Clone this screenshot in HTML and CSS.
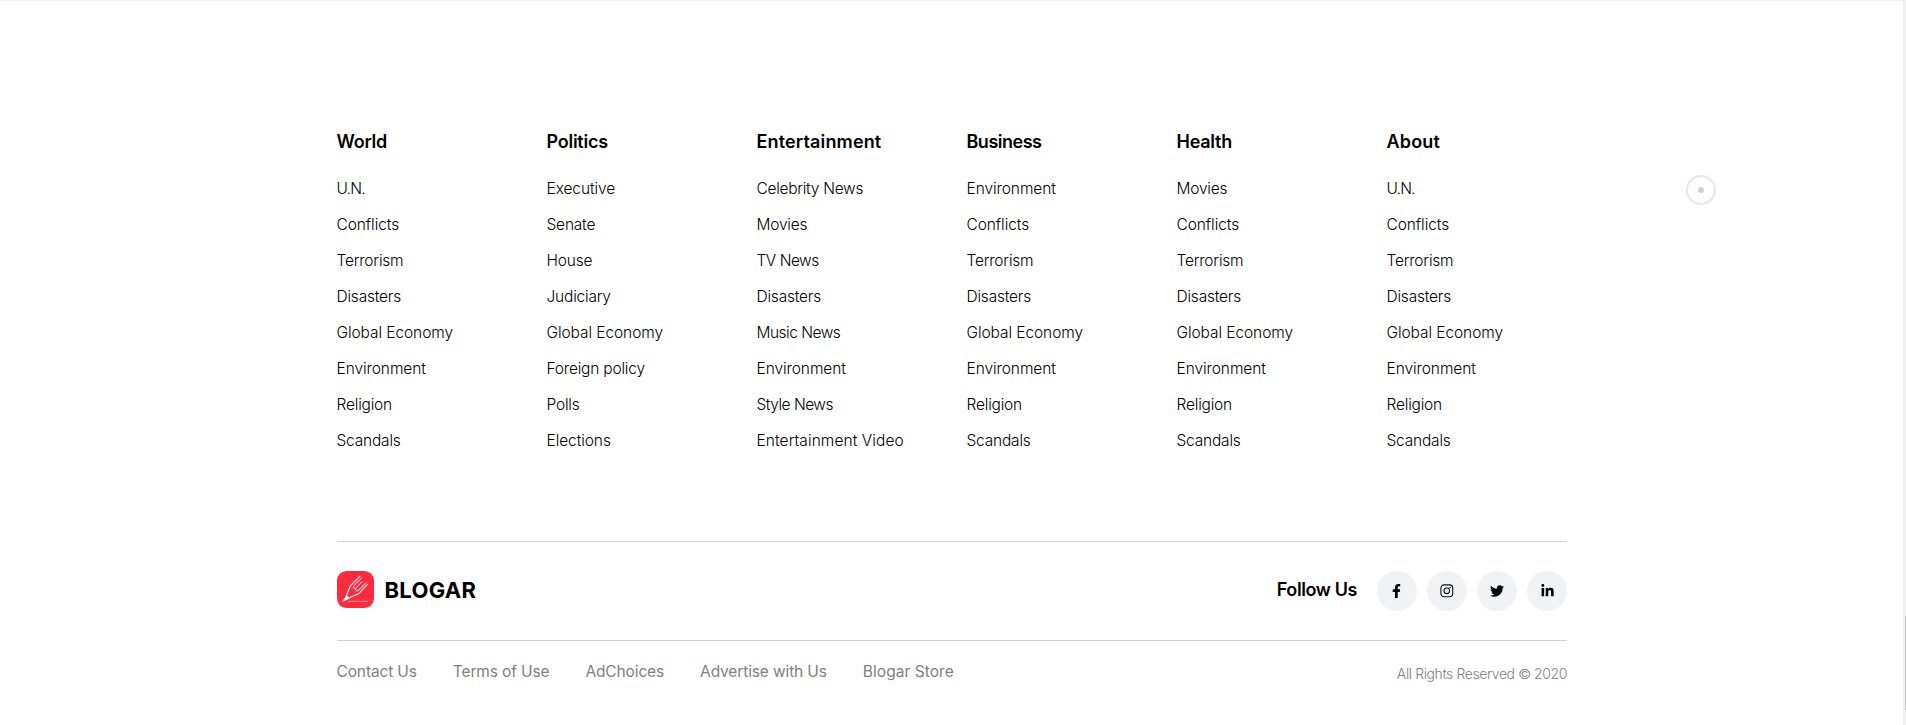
FILE: index.html
```html
<!DOCTYPE html>
<html lang="en">
<head>
<meta charset="utf-8">
<title>Blogar</title>
<link rel="stylesheet" href="styles.css">
</head>
<body>
<footer class="footer">
  <div class="columns">
    <section class="column"><h2>World</h2><ul><li class="tightest">U.N.</li><li class="wide">Conflicts</li><li>Terrorism</li><li>Disasters</li><li class="wide">Global Economy</li><li class="wide">Environment</li><li>Religion</li><li>Scandals</li></ul></section>
    <section class="column"><h2>Politics</h2><ul><li class="wide">Executive</li><li>Senate</li><li>House</li><li>Judiciary</li><li class="wide">Global Economy</li><li>Foreign policy</li><li>Polls</li><li class="wide">Elections</li></ul></section>
    <section class="column"><h2 class="wide-title">Entertainment</h2><ul><li class="snug">Celebrity News</li><li>Movies</li><li class="tight">TV News</li><li>Disasters</li><li class="tight">Music News</li><li class="wide">Environment</li><li class="tight">Style News</li><li class="wider">Entertainment Video</li></ul></section>
    <section class="column"><h2 class="tight-title">Business</h2><ul><li class="wide">Environment</li><li class="wide">Conflicts</li><li>Terrorism</li><li>Disasters</li><li class="wide">Global Economy</li><li class="wide">Environment</li><li>Religion</li><li>Scandals</li></ul></section>
    <section class="column"><h2>Health</h2><ul><li>Movies</li><li class="wide">Conflicts</li><li>Terrorism</li><li>Disasters</li><li class="wide">Global Economy</li><li class="wide">Environment</li><li>Religion</li><li>Scandals</li></ul></section>
    <section class="column"><h2 class="wide-title">About</h2><ul><li class="tightest">U.N.</li><li class="wide">Conflicts</li><li>Terrorism</li><li>Disasters</li><li class="wide">Global Economy</li><li class="wide">Environment</li><li>Religion</li><li>Scandals</li></ul></section>
  </div>
  <div class="brand-row">
    <div class="brand">
      <svg class="brand-mark" viewBox="0 0 37 37" fill="none" stroke="#fff" stroke-linecap="round" stroke-linejoin="round">
        <rect width="37" height="37" rx="9.5" fill="#ff2b3d" stroke="none"/>
        <path d="M23 5.2 13.2 15.2 9.3 24.8 11.8 27 21.5 22.8 30.3 13.4" stroke-width="1.2"/>
        <path d="M24.5 7 17.2 14.6c-1.5 2.3-.6 3.6 1.5 2.7l6.3-6.6M28.8 11.8 21.8 19c-2.2 1.6-3.8.8-3.1-1.7" stroke-width="1"/>
        <path d="M9.3 25.2 5.4 30.5 11.4 27.7Z" fill="#fff" stroke-width=".8"/>
        <path d="M11 30.4h20" stroke-width=".8" opacity=".7"/>
      </svg>
      <span class="brand-name">BLOGAR</span>
    </div>
    <div class="social">
      <span class="social-label">Follow Us</span>
      <a class="social-link"><svg class="facebook" width="9" height="14" viewBox="0 0 320 512"><path d="M279.14 288l14.22-92.66h-88.91v-60.13c0-25.35 12.42-50.06 52.24-50.06h40.42V6.26S260.43 0 225.36 0c-73.22 0-121.08 44.38-121.08 124.72v70.62H22.89V288h81.39v224h100.17V288z"/></svg></a>
      <a class="social-link"><svg width="14" height="14" viewBox="0 0 14 14" fill="none" stroke="#111"><rect x=".9" y=".9" width="11.8" height="11.8" rx="3.2" stroke-width="1.1"/><circle cx="6.8" cy="6.8" r="2.8" stroke-width="1.1"/><circle cx="10.1" cy="3.6" r=".75" fill="#111" stroke="none"/></svg></a>
      <a class="social-link"><svg width="14" height="14" viewBox="0 0 512 512"><path d="M459.37 151.716c.325 4.548.325 9.097.325 13.645 0 138.72-105.583 298.558-298.558 298.558-59.452 0-114.68-17.219-161.137-47.106 8.447.974 16.568 1.299 25.34 1.299 49.055 0 94.213-16.568 130.274-44.832-46.132-.975-84.792-31.188-98.112-72.772 6.498.974 12.995 1.624 19.818 1.624 9.421 0 18.843-1.3 27.614-3.573-48.081-9.747-84.143-51.98-84.143-102.985v-1.299c13.969 7.797 30.214 12.67 47.431 13.319-28.264-18.843-46.781-51.005-46.781-87.391 0-19.492 5.197-37.36 14.294-52.954 51.655 63.675 129.3 105.258 216.365 109.807-1.624-7.797-2.599-15.918-2.599-24.04 0-57.828 46.782-104.934 104.934-104.934 30.213 0 57.502 12.67 76.67 33.137 23.715-4.548 46.456-13.32 66.599-25.34-7.798 24.366-24.366 44.833-46.132 57.827 21.117-2.273 41.584-8.122 60.426-16.243-14.292 20.791-32.161 39.308-52.628 54.253z"/></svg></a>
      <a class="social-link"><svg width="13" height="14" viewBox="0 0 448 512"><path d="M100.28 448H7.4V148.9h92.88zM53.79 108.1C24.09 108.1 0 83.5 0 53.8a53.79 53.79 0 0 1 107.58 0c0 29.7-24.1 54.3-53.79 54.3zM447.9 448h-92.68V302.4c0-34.7-.7-79.2-48.29-79.2-48.29 0-55.69 37.7-55.69 76.7V448h-92.78V148.9h89.08v40.8h1.3c12.4-23.5 42.69-48.3 87.88-48.3 94 0 111.28 61.9 111.28 142.3V448z"/></svg></a>
    </div>
  </div>
  <div class="legal-row">
    <nav class="legal-links"><a>Contact Us</a><a>Terms of Use</a><a>AdChoices</a><a>Advertise with Us</a><a class="store">Blogar Store</a></nav>
    <p class="copyright">All Rights Reserved © 2020</p>
  </div>
</footer>
<div class="cursor-ring"></div>
<div class="scrollbar"><div class="thumb"></div></div>
</body>
</html>
```
FILE: styles.css
```css
* { box-sizing: border-box; }
body {
  margin: 0;
  height: 725px;
  overflow: hidden;
  background: #fff;
  color: #000;
  font-family: Inter, "Open Sans", sans-serif;
  border-top: 1px solid #f0f2f5;
}
.footer { width: 1230.5px; margin-left: 336.5px; padding-top: 126px; }
.columns {
  display: grid;
  grid-template-columns: repeat(6, 210px);
  width: 1260px;
  height: 414px;
}
h2 { margin: 0 0 14px; font-size: 18px; font-weight: 600; line-height: 30px; letter-spacing: -.25px; }
.wide-title { letter-spacing: .15px; }
.tight-title { letter-spacing: -.5px; }
ul { list-style: none; margin: 0; padding: 0; }
li { font-size: 15.5px; font-weight: 300; line-height: 36px; letter-spacing: -.2px; white-space: nowrap; }
.wide { letter-spacing: -.08px; }
.wider { letter-spacing: .08px; }
.snug { letter-spacing: -.28px; }
.tight { letter-spacing: -.5px; }
.tightest { letter-spacing: -.8px; }
.brand-row {
  display: flex;
  justify-content: space-between;
  height: 100px;
  padding-top: 29px;
  border-top: 1px solid #cecfd1;
  border-bottom: 1px solid #cecfd1;
}
.brand { display: flex; align-items: center; height: 37px; gap: 11px; }
.brand-mark { width: 37px; height: 37px; }
.brand-name { font-size: 22px; font-weight: 700; letter-spacing: .3px; }
.social { display: flex; align-items: center; gap: 10px; height: 40px; }
.social-label { font-size: 18px; font-weight: 600; line-height: 22px; letter-spacing: -.4px; margin: 0 10px 2px 0; }
.social-link {
  display: flex; align-items: center; justify-content: center;
  width: 40px; height: 40px; border-radius: 50%; background: #f0f2f5;
}
.facebook { margin-right: 1px; }
.legal-row { display: flex; justify-content: space-between; padding-top: 16px; color: #808080; }
.legal-links { display: flex; gap: 36px; font-size: 15.5px; font-weight: 400; line-height: 30px; letter-spacing: -.13px; }
.store { letter-spacing: .05px; }
.copyright { margin: 2px 0 0; font-size: 14px; font-weight: 300; line-height: 30px; letter-spacing: -.4px; }
.cursor-ring {
  position: absolute; left: 1686px; top: 175px; width: 30px; height: 30px;
  border: 2px solid #e7e7e8; border-radius: 50%;
  display: flex; align-items: center; justify-content: center;
}
.cursor-ring::after { content: ""; width: 6px; height: 6px; border-radius: 50%; background: #cfd0d3; }
.scrollbar { position: absolute; right: 0; top: 0; width: 3px; height: 725px; padding: 616px 0 0 2px; background: #f0f0f0; }
.thumb { height: 94px; background: #c1c1c1; }
```
